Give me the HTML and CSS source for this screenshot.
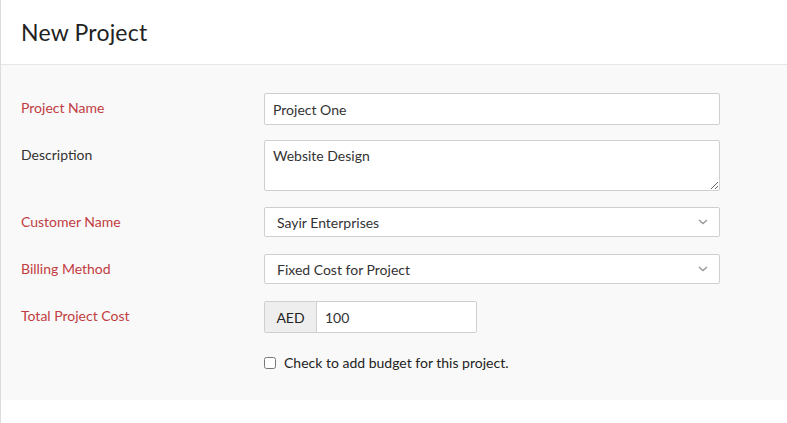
FILE: index.html
```html
<!DOCTYPE html>
<html>
<head>
<meta charset="utf-8">
<link rel="stylesheet" href="styles.css">
</head>
<body>
<div class="page">
  <header class="header"><h1>New Project</h1></header>
  <form class="panel">
    <div class="row">
      <label class="label req">Project Name</label>
      <input class="field input" type="text" value="Project One">
    </div>
    <div class="row">
      <label class="label">Description</label>
      <textarea class="field textarea">Website Design</textarea>
    </div>
    <div class="row">
      <label class="label req">Customer Name</label>
      <div class="field select"><span>Sayir Enterprises</span>
        <svg class="chev" width="10" height="6" viewBox="0 0 10 6"><path d="M1 1l4 3.5L9 1" fill="none" stroke="#999" stroke-width="1.5"/></svg>
      </div>
    </div>
    <div class="row">
      <label class="label req">Billing Method</label>
      <div class="field select"><span>Fixed Cost for Project</span>
        <svg class="chev" width="10" height="6" viewBox="0 0 10 6"><path d="M1 1l4 3.5L9 1" fill="none" stroke="#999" stroke-width="1.5"/></svg>
      </div>
    </div>
    <div class="row">
      <label class="label req">Total Project Cost</label>
      <div class="group">
        <span class="addon">AED</span>
        <input class="group-input" type="text" value="100">
      </div>
    </div>
    <div class="row check-row">
      <span class="label"></span>
      <label class="check"><input type="checkbox" class="cb"> Check to add budget for this project.</label>
    </div>
  </form>
</div>
</body>
</html>
```

FILE: styles.css
```css
* { box-sizing: border-box; }
html, body { margin: 0; padding: 0; background: #fff; }
body { font-family: Lato, "Open Sans", sans-serif; color: #333; font-size: 14px; }
.page { border-left: 1px solid #dcdcdc; min-height: 423px; }
.header { height: 65px; border-bottom: 1px solid #e6e6e6; padding: 0 20px; display: flex; align-items: center; }
.header h1 { margin: 0; font-weight: 400; font-size: 23px; color: #222; padding-bottom: 1px; letter-spacing: 0.2px; }
.panel { background: #f9f9f9; padding: 28px 0 26px 20px; width: 100%; }
.row { display: flex; align-items: flex-start; margin-bottom: 15px; }
.row:nth-child(2) { margin-bottom: 16px; }
.row:nth-child(3), .row:nth-child(4) { margin-bottom: 17px; }
.row:nth-child(5) { margin-bottom: 19px; }
.label { width: 243px; line-height: 30px; font-size: 14px; color: #333; flex: none; }
.label.req { color: #c13d41; }
.field { width: 456px; background: #fff; border: 1px solid #cfcfcf; border-radius: 2px; font-family: inherit; font-size: 14px; color: #333; }
.input { height: 32px; padding: 0 8px; outline: none; }
.textarea { height: 51px; padding: 6px 8px; resize: vertical; outline: none; display: block; }
.select { height: 30px; padding: 0 12px; display: flex; align-items: center; justify-content: space-between; }
.chev { margin-right: -1px; }
.group { display: flex; height: 32px; width: 213px; border: 1px solid #cfcfcf; border-radius: 2px; overflow: hidden; }
.addon { width: 52px; background: #eeeeee; border-right: 1px solid #cfcfcf; display: flex; align-items: center; justify-content: center; color: #222; font-size: 14px; }
.group-input { flex: 1; border: 0; padding: 0 8px; font-family: inherit; font-size: 14px; color: #333; outline: none; min-width: 0; }
.check-row { margin-bottom: 0; }
.check-row .label { line-height: 22px; }
.check { display: flex; align-items: center; gap: 8px; line-height: 22px; color: #222; font-size: 14px; }
.cb { margin: 0; width: 12px; height: 12px; }
```
